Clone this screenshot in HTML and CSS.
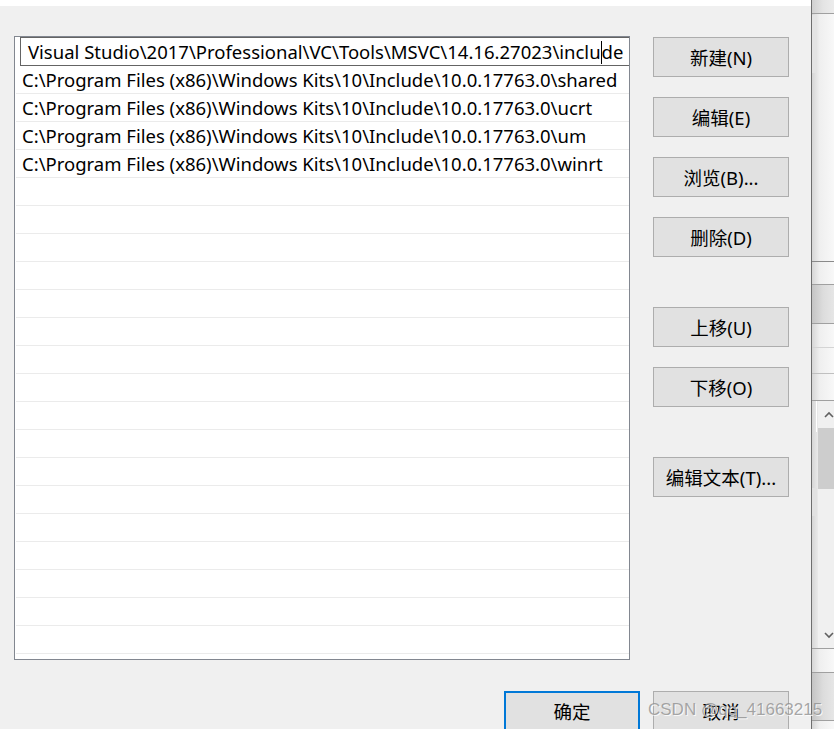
FILE: index.html
```html
<!DOCTYPE html>
<html>
<head>
<meta charset="utf-8">
<link rel="stylesheet" href="styles.css">
</head>
<body>
<div class="screen">
  <div class="dialog">
    <div class="topstrip"></div>
    <div class="content">
      <div class="main">
        <div class="list">
          <div class="row first">
            <div class="editbox"><span>Visual Studio\2017\Professional\VC\Tools\MSVC\14.16.27023\inclu</span><span class="caret"></span><span>de</span></div>
          </div>
          <div class="row">C:\Program Files (x86)\Windows Kits\10\Include\10.0.17763.0\shared</div>
          <div class="row">C:\Program Files (x86)\Windows Kits\10\Include\10.0.17763.0\ucrt</div>
          <div class="row">C:\Program Files (x86)\Windows Kits\10\Include\10.0.17763.0\um</div>
          <div class="row">C:\Program Files (x86)\Windows Kits\10\Include\10.0.17763.0\winrt</div>
          <div class="row"></div><div class="row"></div><div class="row"></div><div class="row"></div>
          <div class="row"></div><div class="row"></div><div class="row"></div><div class="row"></div>
          <div class="row"></div><div class="row"></div><div class="row"></div><div class="row"></div>
          <div class="row"></div><div class="row"></div><div class="row"></div><div class="row"></div>
          <div class="row"></div><div class="row"></div>
        </div>
        <div class="buttons">
          <div class="group">
            <div class="btn">新建(N)</div>
            <div class="btn">编辑(E)</div>
            <div class="btn">浏览(B)...</div>
            <div class="btn">删除(D)</div>
          </div>
          <div class="group">
            <div class="btn">上移(U)</div>
            <div class="btn">下移(O)</div>
          </div>
          <div class="group">
            <div class="btn">编辑文本(T)...</div>
          </div>
        </div>
      </div>
      <div class="footer">
        <div class="btn primary">确定</div>
        <div class="btn">取消</div>
      </div>
    </div>
  </div>
  <div class="edge"></div>
  <div class="behind">
    <div class="seg s1"></div>
    <div class="seg s2"><div class="faint"></div></div>
    <div class="seg s3"></div>
    <div class="seg s4 gray"></div>
    <div class="seg s5 soft"></div>
    <div class="seg s6"></div>
    <div class="seg s7"></div>
    <div class="seg s8">
      <div class="sb-left"><div class="sb-mark"></div><div class="sb-block"></div></div>
      <div class="scrollbar">
        <div class="arrow"><svg width="10" height="8" viewBox="0 0 10 8"><path d="M1 6 L5 2 L9 6" fill="none" stroke="#606060" stroke-width="1.6"/></svg></div>
        <div class="thumb"></div>
        <div class="track"></div>
        <div class="arrow"><svg width="10" height="8" viewBox="0 0 10 8"><path d="M1 2 L5 6 L9 2" fill="none" stroke="#606060" stroke-width="1.6"/></svg></div>
      </div>
    </div>
    <div class="seg s9"></div>
    <div class="seg s10 gray"></div>
    <div class="seg s11"></div>
  </div>
  <div class="watermark">CSDN @qq_41663215</div>
</div>
</body>
</html>
```

FILE: styles.css
```css
html, body {
  margin: 0;
  padding: 0;
}
body {
  width: 834px;
  height: 729px;
  overflow: hidden;
  font-family: "Noto Sans", "Noto Sans CJK SC", sans-serif;
  color: #000;
}
.screen {
  display: flex;
  width: 834px;
  height: 729px;
  position: relative;
  overflow: hidden;
}
.dialog {
  width: 811px;
  flex: none;
  display: flex;
  flex-direction: column;
  background: #f0f0f0;
}
.topstrip {
  height: 6px;
  background: #fff;
  flex: none;
}
.content {
  padding: 30px 22px 0 14px;
}
.main {
  display: flex;
  gap: 23px;
}
.list {
  width: 614px;
  height: 622px;
  flex: none;
  border: 1px solid #828790;
  background: #fff;
  overflow: hidden;
}
.row {
  height: 27px;
  border-bottom: 1px solid #ebebeb;
  margin-left: 1px;
  padding-left: 6px;
  font-size: 18.5px;
  line-height: 27px;
  white-space: nowrap;
  overflow: hidden;
}
.row.first {
  height: 29px;
  border-bottom: none;
  padding-left: 5px;
  margin-left: 0;
}
.editbox {
  height: 27px;
  border: 1px solid #646464;
  border-right: none;
  padding-left: 7px;
  line-height: 27px;
  white-space: nowrap;
  overflow: hidden;
}
.caret {
  display: inline-block;
  width: 1px;
  height: 23px;
  background: #000;
  vertical-align: -5px;
}
.buttons {
  width: 136px;
  flex: none;
  padding-top: 1px;
  display: flex;
  flex-direction: column;
  gap: 50px;
}
.group {
  display: flex;
  flex-direction: column;
  gap: 20px;
}
.btn {
  width: 136px;
  height: 40px;
  box-sizing: border-box;
  background: #e1e1e1;
  border: 1px solid #adadad;
  display: flex;
  align-items: center;
  justify-content: center;
  font-size: 18.5px;
  white-space: nowrap;
}
.btn.primary {
  border: 2px solid #0078d7;
}
.footer {
  margin-top: 31px;
  display: flex;
  justify-content: flex-end;
  gap: 13px;
}
.edge {
  width: 1px;
  flex: none;
  background: #6e6e6e;
}
.behind {
  width: 22px;
  flex: none;
  display: flex;
  flex-direction: column;
  background: linear-gradient(to right, #d6d6d6, #efefef 35%, #f8f8f8);
}
.seg {
  border-bottom: 1px solid #a0a0a0;
  flex: none;
}
.seg.gray {
  background: linear-gradient(to right, #c4c4c4, #dcdcdc 50%, #e6e6e6);
}
.s1 { height: 13px; background: linear-gradient(to right, #d0d0d0, #e4e4e4 50%, #ececec); }
.s2 { height: 247px; border-bottom-color: #8a8a8a; }
.faint { width: 5px; height: 58px; margin-top: 1px; background: #e4e4e4; }
.s3 { height: 22px; }
.s4 { height: 38px; }
.s5 { height: 23px; border-bottom-color: #d4d4d4; }
.s6 { height: 25px; border-bottom-color: #c0c0c0; }
.s7 { height: 26px; }
.s8 { height: 247px; display: flex; }
.s9 { height: 23px; }
.s10 { height: 47px; }
.s11 { height: 20px; border-bottom: none; }
.sb-left {
  width: 6px;
  flex: none;
  display: flex;
  flex-direction: column;
}
.sb-mark {
  width: 1px;
  height: 31px;
  margin-left: 4px;
  background: #ffffff;
}
.sb-block {
  width: 5px;
  height: 28px;
  margin-top: 56px;
  background: #e2e2e2;
}
.scrollbar {
  width: 16px;
  flex: none;
  display: flex;
  flex-direction: column;
  background: #f0f0f0;
}
.arrow {
  height: 27px;
  display: flex;
  align-items: center;
  justify-content: flex-end;
  flex: none;
}
.thumb {
  height: 61px;
  background: #cdcdcd;
  flex: none;
}
.track {
  flex: 1;
}
.watermark {
  position: absolute;
  left: 648px;
  top: 700px;
  font-family: "Liberation Sans", Arial, sans-serif;
  font-size: 17px;
  color: rgba(140, 140, 140, 0.75);
  text-shadow: 1px 1px 0 rgba(255, 255, 255, 0.8);
  white-space: nowrap;
}
```
